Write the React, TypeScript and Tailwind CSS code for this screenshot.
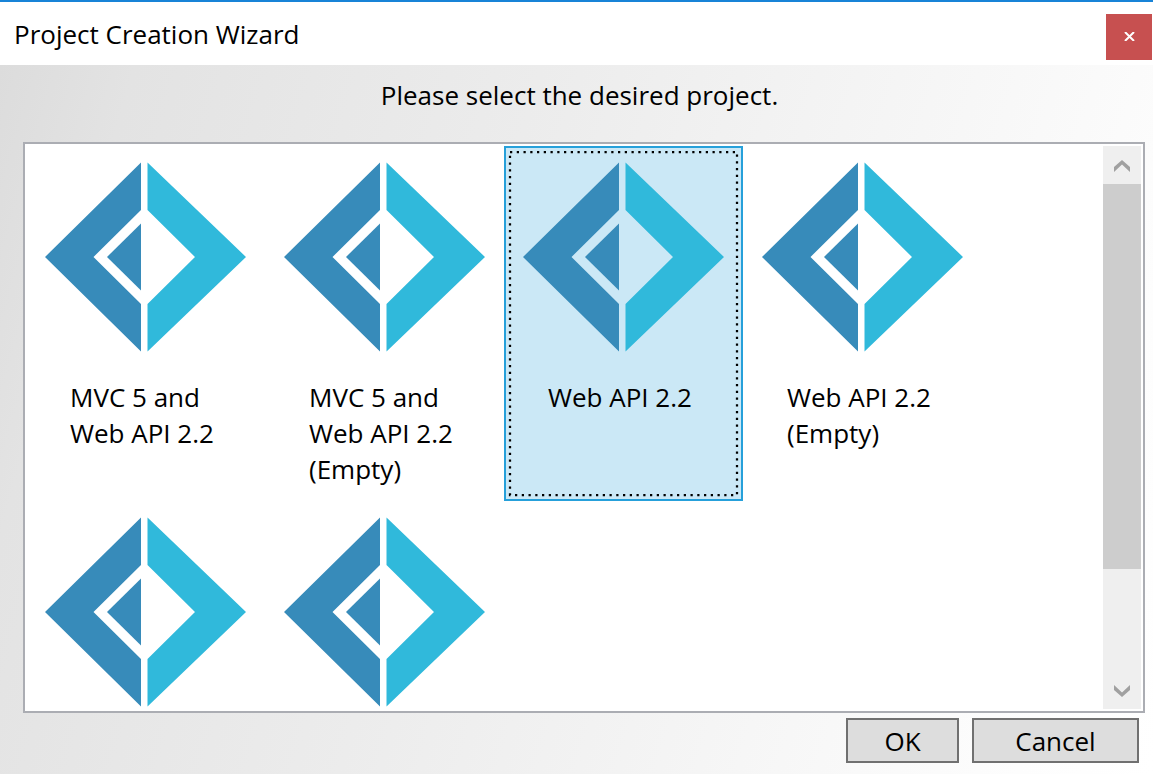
import { useState } from "react";

type Project = { id: string; lines: string[] };

const projects: Project[] = [
  { id: "mvc-web-api", lines: ["MVC 5 and", "Web API 2.2"] },
  { id: "mvc-web-api-empty", lines: ["MVC 5 and", "Web API 2.2", "(Empty)"] },
  { id: "web-api", lines: ["Web API 2.2"] },
  { id: "web-api-empty", lines: ["Web API 2.2", "(Empty)"] },
  { id: "project-5", lines: [] },
  { id: "project-6", lines: [] },
];

function FSharpLogo() {
  return (
    <svg viewBox="0 0 202 190" className="h-[190px] w-[202px]" aria-hidden="true">
      <path fill="#378bba" d="M97 0.5V48L49.500 95l47.500 47V189.500L1 95Z" />
      <path fill="#378bba" d="M97 61.500V128.500L63 95Z" />
      <path fill="#30b9db" d="M103.500 0.500V48L151 95 103.500 142V189.500L202 95Z" />
    </svg>
  );
}

function FocusRect() {
  return (
    <svg className="pointer-events-none absolute inset-1 size-[calc(100%-8px)] overflow-visible" aria-hidden="true">
      <rect width="100%" height="100%" fill="none" stroke="#000" strokeWidth="2.25" strokeDasharray="2.25 4.5" />
    </svg>
  );
}

function ProjectTile({ project, selected, onSelect }: { project: Project; selected: boolean; onSelect: () => void }) {
  return (
    <button
      type="button"
      role="option"
      aria-selected={selected}
      aria-label={project.lines.length ? undefined : project.id}
      onClick={onSelect}
      className={
        selected
          ? "relative flex h-[355px] flex-col items-start border-2 border-[#26a0da] bg-[#cbe8f6] pt-[14px] text-left"
          : "relative flex h-[355px] flex-col items-start border-2 border-transparent pt-[14px] text-left"
      }
    >
      <span className="ml-4">
        <FSharpLogo />
      </span>
      <span className="mt-[27px] ml-[42px] block">
        {project.lines.map((line) => (
          <span key={line} className="block whitespace-nowrap">
            {line}
          </span>
        ))}
      </span>
      {selected && <FocusRect />}
    </button>
  );
}

function ScrollButton({ label, path }: { label: string; path: string }) {
  return (
    <button type="button" aria-label={label} className="flex h-[38px] shrink-0 items-center justify-center bg-[#efefef] pt-0.5">
      <svg viewBox="0 0 16 12" className="h-3 w-4" aria-hidden="true">
        <path d={path} fill="#a0a0a0" />
      </svg>
    </button>
  );
}

export default function App() {
  const [selected, setSelected] = useState("web-api");

  return (
    <div className="flex h-screen flex-col border-t-2 border-[#1883d7] bg-white font-['Open_Sans','Noto_Sans',sans-serif] text-[26px] leading-9 text-black">
      <header className="flex h-[63px] shrink-0 items-center justify-between pr-px pl-[14px]">
        <h1>Project Creation Wizard</h1>
        <button type="button" aria-label="Close" className="mt-1.5 flex size-[46px] items-center justify-center bg-[#c75050]">
          <svg viewBox="0 0 11 9" className="h-[9px] w-[11px]" aria-hidden="true">
            <path d="M1 0L10 9M10 0L1 9" stroke="#fff" strokeWidth="2" />
          </svg>
        </button>
      </header>
      <main className="flex min-h-0 flex-1 flex-col bg-[linear-gradient(106deg,#dcdcdc_0%,#e3e3e3_10%,#ececec_40%,#fdfdfd_90%,#ffffff_100%)] pr-2 pb-[11px] pl-[23px]">
        <p id="prompt" className="pt-3 pr-[9px] pb-[29px] text-center">
          Please select the desired project.
        </p>
        <div className="flex min-h-0 flex-1 border-2 border-[#abadb3] bg-white py-0.5 pr-0.5 pl-px">
          <div
            role="listbox"
            aria-labelledby="prompt"
            className="grid min-w-0 flex-1 grid-cols-[repeat(auto-fill,239px)] content-start overflow-hidden"
          >
            {projects.map((project) => (
              <ProjectTile
                key={project.id}
                project={project}
                selected={project.id === selected}
                onSelect={() => setSelected(project.id)}
              />
            ))}
          </div>
          <div className="flex w-[38px] shrink-0 flex-col bg-[#efefef]">
            <ScrollButton label="Scroll up" path="M8 0L16 7V12L8 4.500L0 12V7Z" />
            <div className="flex min-h-0 flex-1 flex-col">
              <div className="h-[79%] bg-[#cdcdcd]" />
            </div>
            <ScrollButton label="Scroll down" path="M8 12L16 5V0L8 7.500L0 0V5Z" />
          </div>
        </div>
        <div className="flex justify-end gap-[13px] pt-[5px] pr-[6px]">
          <button type="button" className="h-[45px] w-[113px] border-2 border-[#707070] bg-[#dddddd]">
            OK
          </button>
          <button type="button" className="h-[45px] w-[167px] border-2 border-[#707070] bg-[#dddddd]">
            Cancel
          </button>
        </div>
      </main>
    </div>
  );
}
